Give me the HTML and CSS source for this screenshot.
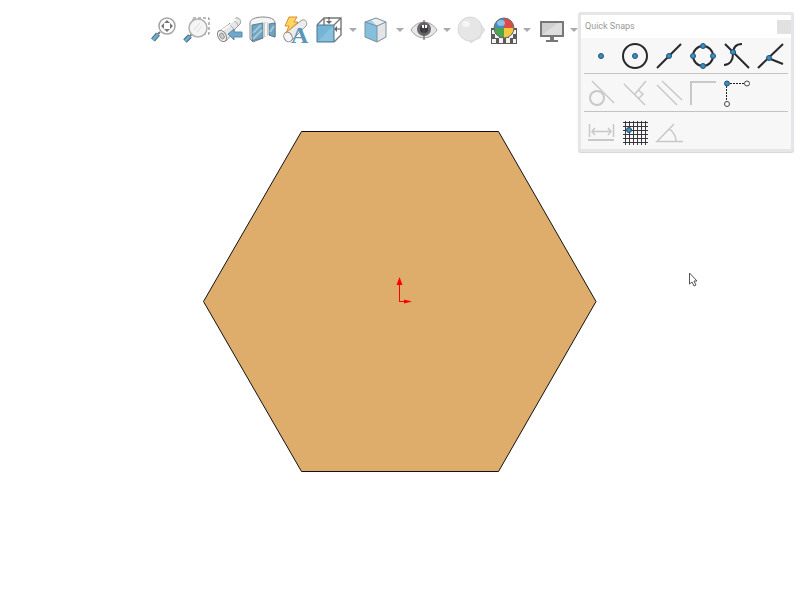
FILE: index.html
```html
<!DOCTYPE html>
<html lang="en">

<head>
  <meta charset="UTF-8">
  <meta name="viewport" content="width=device-width, initial-scale=1.0">
  <title>Sketch - Quick Snaps</title>
  <link rel="stylesheet" href="styles.css">
</head>

<body>

  <!-- view toolbar -->
  <header class="toolbar">
    <button class="tool" aria-label="Zoom to fit">
      <svg viewBox="0 0 28 28">
        <path d="M10 16l-3 3" stroke="#777" stroke-width="2"/>
        <path d="M8 18l-5 6" stroke="#446477" stroke-width="5"/>
        <path d="M8 18l-5 6" stroke="#6fadd0" stroke-width="3"/>
        <circle cx="17" cy="10" r="8" fill="#fff" stroke="#a3a3a3" stroke-width="1.5"/>
        <path d="M17 4l3 3h-6zM17 16l3-3h-6zM11 10l3-3v6zM23 10l-3-3v6z" fill="#777"/>
      </svg>
    </button>
    <button class="tool" aria-label="Zoom to area">
      <svg viewBox="0 0 28 28">
        <path d="M10 2h16v16H10z" fill="none" stroke="#777" stroke-dasharray="3 2"/>
        <path d="M9 18l-3 3" stroke="#777" stroke-width="2"/>
        <path d="M7 20l-5 5" stroke="#446477" stroke-width="5"/>
        <path d="M7 20l-5 5" stroke="#6fadd0" stroke-width="3"/>
        <circle cx="15" cy="12" r="9" fill="#f5f5f5" stroke="#b1b1b1" stroke-width="1.5"/>
        <path d="M11 14l6-7M14 16l5-6" stroke="#ddd"/>
      </svg>
    </button>
    <button class="tool" aria-label="Previous view">
      <svg viewBox="0 0 28 28">
        <path d="M2 16L12 9l2-2 6-5c3-1 6 3 4 6l-5 5-1 3-8 9z" fill="#e6e6e6" stroke="#999"/>
        <path d="M12 9c3 0 6 3 6 6M17 5c3 0 5 3 5 5" fill="none" stroke="#aaa"/>
        <path d="M5 15l9-6M14 7l6-4" stroke="#fff" stroke-width="2"/>
        <ellipse cx="6" cy="20" rx="4" ry="6" transform="rotate(-30 6 20)" fill="#f2f2f2" stroke="#888"/>
        <ellipse cx="6" cy="20" rx="2" ry="3" transform="rotate(-30 6 20)" fill="#ccc" stroke="#999"/>
        <path d="M12 18l6-5v3h8v5h-8v3z" fill="#6fa8c8" stroke="#5a8dab"/>
      </svg>
    </button>
    <button class="tool" aria-label="Section view">
      <svg viewBox="0 0 28 28">
        <path d="M1 7c0-4 6-6 13-6s12 2 12 6v14l-6-2V9c-2-2-4-2-6 0v13l-10 4-3-3z" fill="#f4f4f4" stroke="#888"/>
        <path d="M3 9l11-2v15L3 25zM20 8l6-1v14l-6-2z" fill="#6fa3bf" stroke="#5d7f92"/>
        <path d="M4 17l8-8M4 23l9-9M21 16l4-6" stroke="#9cc9de" stroke-width="2"/>
        <path d="M14 7c2-1 4-1 6 1v11l-6 3z" fill="#ccc"/>
        <path d="M17 7v13" stroke="#f6f6f6" stroke-width="2"/>
      </svg>
    </button>
    <button class="tool" aria-label="Dynamic annotation views">
      <svg viewBox="0 0 28 28">
        <path d="M2 18L20 4c4-1 6 3 4 6L9 25z" fill="#ececec" stroke="#999"/>
        <ellipse cx="6" cy="21" rx="4" ry="5" transform="rotate(-30 6 21)" fill="#f6f6f6" stroke="#888"/>
        <path d="M7 1h8l-3 5h4L4 17l3-7H3z" fill="#ffd65c" stroke="#d98a3c"/>
        <text class="letter" x="9" y="27">A</text>
      </svg>
    </button>
    <button class="tool" aria-label="View orientation">
      <svg viewBox="0 0 28 28">
        <path d="M2 9l7-7h17v17l-7 7M19 9l7-7M9 2v7" fill="none" stroke="#777" stroke-width="1.4"/>
        <path d="M2 9h17v17H2z" fill="#75b4d6" stroke="#4e778e"/>
        <path d="M3 25L18 10v15z" fill="#88c0dd"/>
        <path d="M14 1v4M21 13h5" stroke="#555"/>
        <path d="M14 8l-3-3h6zM19 13l3-3v6z" fill="#666"/>
      </svg>
    </button>
    <button class="drop" aria-label="View orientation options"></button>
    <button class="tool" aria-label="Display style">
      <svg viewBox="0 0 28 28">
        <path d="M3 6l11-4 10 4v15l-9 5-12-5z" fill="#9fcfe5"/>
        <path d="M9 4l5-2 10 4-9 4z" fill="#eee"/>
        <path d="M15 10l9-4v15l-9 5z" fill="#e3e4e7"/>
        <path d="M3 6l12 4v16L3 21z" fill="#86bfdb"/>
        <path d="M3 6l11-4 10 4v15l-9 5-12-5zM3 6l12 4 9-4M15 10v16" fill="none" stroke="#7a929e"/>
      </svg>
    </button>
    <button class="drop" aria-label="Display style options"></button>
    <button class="tool" aria-label="Hide/show items">
      <svg viewBox="0 0 28 28">
        <path d="M2 14c6-10 19-11 26 0-7 11-20 10-26 0z" fill="#e7e7e7" stroke="#a0a0a0"/>
        <circle cx="15" cy="13" r="7" fill="#69656b"/>
        <circle cx="15" cy="13" r="4" fill="#39373b"/>
        <path d="M15 4v20" stroke="#555"/>
        <path d="M13 9h2v3h-2zM16 9h2v3h-2z" fill="#fff"/>
      </svg>
    </button>
    <button class="drop" aria-label="Hide/show options"></button>
    <button class="tool" aria-label="Edit appearance">
      <svg viewBox="0 0 28 28">
        <path d="M25 9l4 5-4 5-1 3-5 2-4 3-4-4" fill="#e4e4e4" stroke="#dcdcdc"/>
        <circle cx="14" cy="13" r="12" fill="#e6e6e6" stroke="#d8d8d8"/>
        <ellipse cx="10" cy="8" rx="4" ry="3" fill="#f5f5f5"/>
      </svg>
    </button>
    <button class="tool" aria-label="Apply scene">
      <svg viewBox="0 0 28 28">
        <path d="M2 12h26v16H2z" fill="#5d5a5c"/>
        <path d="M3 14h3v4H3zM24 14h3v4h-3zM6 18h4v4H6zM20 18h4v4h-4zM3 23h4v4H3zM10 22h4v5h-4zM17 22h4v5h-4zM24 23h3v4h-3z" fill="#f2f2f2"/>
        <path d="M15 12V2A10 10 0 0 0 5 12z" fill="#438ec7"/>
        <path d="M15 12h10A10 10 0 0 0 15 2z" fill="#dc4b49"/>
        <path d="M15 12H5a10 10 0 0 0 10 10z" fill="#4ea34f"/>
        <path d="M15 12v10a10 10 0 0 0 10-10z" fill="#f2c83f"/>
        <ellipse cx="12" cy="7" rx="4" ry="3" fill="#8fbfe2"/>
        <circle cx="15" cy="12" r="10" fill="none" stroke="#686b70"/>
      </svg>
    </button>
    <button class="drop" aria-label="Scene options"></button>
    <button class="tool" aria-label="View settings">
      <svg viewBox="0 0 28 28">
        <path d="M5 6h22v14H5z" fill="#cfcfd0" stroke="#777" stroke-width="2"/>
        <path d="M6 19L22 7h4v12z" fill="#dedee0"/>
        <path d="M14 21h4v3h4v2H10v-2h4z" fill="#777"/>
      </svg>
    </button>
    <button class="drop" aria-label="View settings options"></button>
  </header>

  <!-- drawing area -->
  <main class="canvas">
    <svg class="sketch" viewBox="0 0 396 346" role="img" aria-label="Hexagon sketch">
      <path d="M99.5 4.5h197l97.5 170-97.5 170h-197L1.5 174.500z" fill="#deac6b" stroke="#111"/>
      <path d="M197.5 174V158M197 174.500h8" stroke="#f00" fill="none"/>
      <path d="M197.500 150l3 8h-6zM210 174.500l-8-2v4z" fill="#f00"/>
    </svg>
    <svg class="cursor" viewBox="0 0 10 16" aria-hidden="true">
      <path d="M1.500 1v11l2.500-2 2 4 2-1-2-4h3z" fill="#fff" stroke="#55535a"/>
    </svg>
  </main>

  <!-- snaps palette -->
  <section class="panel">
    <div class="panel-head">
      <h1>Quick Snaps</h1>
      <button class="close" aria-label="Close"></button>
    </div>
    <div class="row first">
      <button class="snap" aria-label="Point snap">
        <svg viewBox="0 0 34 34"><circle class="dot" cx="17" cy="17" r="2.500"/></svg>
      </button>
      <button class="snap" aria-label="Center point snap">
        <svg viewBox="0 0 34 34">
          <circle class="line" cx="17" cy="17" r="12"/>
          <circle class="dot" cx="17" cy="17" r="2.500"/>
        </svg>
      </button>
      <button class="snap" aria-label="Midpoint snap">
        <svg viewBox="0 0 34 34">
          <path class="line" d="M5 29L29 5"/>
          <circle class="dot" cx="17" cy="17" r="2.500"/>
        </svg>
      </button>
      <button class="snap" aria-label="Quadrant snap">
        <svg viewBox="0 0 34 34">
          <circle class="line" cx="17" cy="17" r="10"/>
          <circle class="dot" cx="17" cy="7" r="2.500"/>
          <circle class="dot" cx="27" cy="17" r="2.500"/>
          <circle class="dot" cx="17" cy="27" r="2.500"/>
          <circle class="dot" cx="7" cy="17" r="2.500"/>
        </svg>
      </button>
      <button class="snap" aria-label="Intersection snap">
        <svg viewBox="0 0 34 34">
          <path class="line" d="M5 5l24 24M4 26c6 0 9-5 9-11 0-6 3-10 9-10"/>
          <circle class="dot" cx="13" cy="13" r="2.500"/>
        </svg>
      </button>
      <button class="snap" aria-label="Nearest snap">
        <svg viewBox="0 0 34 34">
          <path class="line" d="M4 29L29 5M14 19l15 6"/>
          <circle class="dot" cx="15" cy="19" r="2.500"/>
        </svg>
      </button>
    </div>
    <div class="row">
      <button class="snap off" aria-label="Tangent snap">
        <svg viewBox="0 0 34 34">
          <circle class="line" cx="13" cy="21" r="7"/>
          <path class="line thin" d="M8 4l22 22"/>
        </svg>
      </button>
      <button class="snap off" aria-label="Perpendicular snap">
        <svg viewBox="0 0 34 34">
          <path class="line thin" d="M6 7l21 21M17 17L28 4M20 13l5 4-4 4"/>
        </svg>
      </button>
      <button class="snap off" aria-label="Parallel snap">
        <svg viewBox="0 0 34 34"><path class="line thin" d="M5 8l20 20M10 4l20 19"/></svg>
      </button>
      <button class="snap off" aria-label="Horizontal/vertical snap">
        <svg viewBox="0 0 34 34"><path class="line" d="M5 28V5h25"/></svg>
      </button>
      <button class="snap" aria-label="Horizontal/vertical to points snap">
        <svg viewBox="0 0 34 34">
          <path class="dash" d="M6.500 26V6M7 6.500h20"/>
          <circle class="dot" cx="7" cy="6.500" r="2.500"/>
          <circle class="ring" cx="27" cy="6.500" r="2.500"/>
          <circle class="ring" cx="7" cy="27" r="2.500"/>
        </svg>
      </button>
    </div>
    <div class="row">
      <button class="snap off" aria-label="Length snap">
        <svg viewBox="0 0 34 34">
          <path class="line" d="M4 25h26"/>
          <path class="line thin" d="M5.500 9v13M29.500 9v13M8 16.500h19M11 13l-3 3.500 3 3.500M24 13l3 3.500-3 3.500"/>
        </svg>
      </button>
      <button class="snap" aria-label="Grid snap">
        <svg viewBox="0 0 34 34">
          <path class="grid" d="M7.500 6v24M11.500 6v24M15.500 6v24M19.500 6v24M23.500 6v24M27.500 6v24M5 7.500h25M5 11.500h25M5 15.500h25M5 19.500h25M5 23.500h25M5 27.500h25"/>
          <circle class="dot" cx="11" cy="15" r="2.500"/>
        </svg>
      </button>
      <button class="snap off" aria-label="Angle snap">
        <svg viewBox="0 0 34 34">
          <path class="line thin" d="M22 9L5 26.500h26M17 14c4 2 7 7 7 12"/>
        </svg>
      </button>
    </div>
  </section>

</body>

</html>
```

FILE: styles.css
```css
* {
  margin: 0;
  padding: 0;
  box-sizing: border-box;
}

body {
  background-color: #fff;
  font-family: Roboto, "Liberation Sans", sans-serif;
}

button {
  border: 0;
  background: none;
}

svg {
  display: block;
}

/* toolbar lies over the drawing area */
.toolbar {
  position: absolute;
  top: 16px;
  left: 150px;
  z-index: 1;
  display: flex;
  align-items: center;
  gap: 5px;
}

.tool,
.tool svg {
  width: 28px;
  height: 28px;
  overflow: visible;
}

.letter {
  font-family: "Liberation Serif", serif;
  font-size: 24px;
  font-weight: bold;
  fill: #5b96b7;
}

.drop {
  width: 9px;
  height: 28px;
  display: flex;
  align-items: center;
  justify-content: center;
}

.drop::before {
  content: "";
  border: 4px solid transparent;
  border-top-color: #aaa;
  border-bottom: 0;
}

.canvas {
  position: relative;
  min-height: 100vh;
  display: flex;
  align-items: center;
  justify-content: center;
}

.sketch {
  width: 396px;
  height: 346px;
}

.cursor {
  position: absolute;
  top: 272px;
  left: 688px;
  width: 10px;
  height: 16px;
}

/* floating palette */
.panel {
  position: absolute;
  top: 12px;
  right: 6px;
  z-index: 2;
  padding: 0 3px;
  border: 3px solid #e6e5e7;
  border-radius: 3px;
  background-color: #f7f7f7;
  box-shadow: 0 1px 1px #d6d4d6;
}

.panel-head {
  height: 23px;
  margin: 0 -3px;
  padding: 5px 0 0 4px;
  display: flex;
  justify-content: space-between;
  background-color: #fff;
}

.panel-head h1 {
  font-size: 9px;
  font-weight: 400;
  line-height: 12px;
  color: #999;
}

.close {
  width: 14px;
  height: 14px;
  background-color: #e1e1e1;
}

.row {
  width: 204px;
  height: 38px;
  display: flex;
  align-items: flex-end;
}

.row.first {
  height: 35px;
}

.row + .row {
  border-top: 1px solid #c4c2c4;
}

.snap,
.snap svg {
  width: 34px;
  height: 34px;
}

.line {
  fill: none;
  stroke: #29272b;
  stroke-width: 2;
}

.off .line {
  stroke: #c9c7ca;
}

.off .thin {
  stroke-width: 1.5;
}

.dot {
  fill: #3d8dbd;
  stroke: #205174;
}

.dash {
  fill: none;
  stroke: #222;
  stroke-dasharray: 2 1;
}

.ring {
  fill: #fff;
  stroke: #444;
}

.grid {
  stroke: #39373b;
}
```
